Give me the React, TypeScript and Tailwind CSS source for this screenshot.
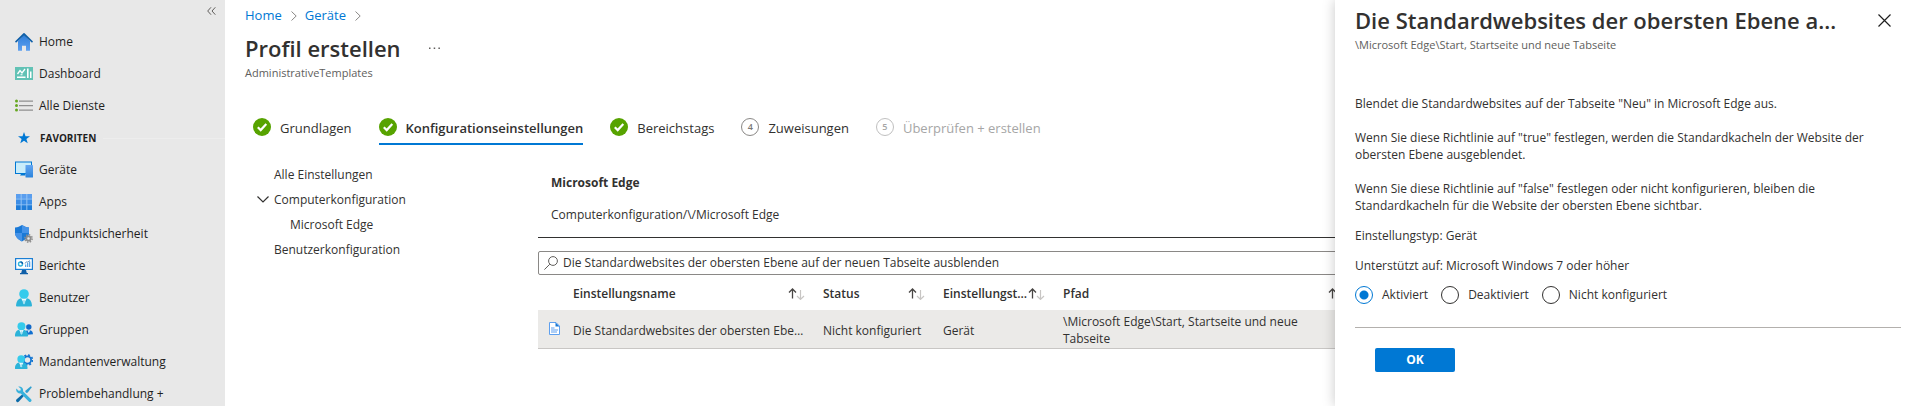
import React, { useState } from 'react';

const HomeIcon = () => (
  <svg viewBox="0 0 18 18" className="h-[18px] w-[18px] shrink-0">
    <defs>
      <linearGradient id="home" x1="0" y1="0" x2="0" y2="1">
        <stop offset="0" stopColor="#2f7fdb" />
        <stop offset="1" stopColor="#5ea0ef" />
      </linearGradient>
    </defs>
    <path d="M3 8l6-6 6 6v9.2a.5.5 0 0 1-.5.5H11v-5H7v5H3.500a.5.5 0 0 1-.5-.5z" fill="url(#home)" />
    <path d="M8.400.3a.9.9 0 0 1 1.200 0L18 8.500l-1 1.300L9 2.400 1 9.800 0 8.500z" fill="#0f5fa8" />
  </svg>
);

const DashboardIcon = () => (
  <svg viewBox="0 0 18 18" className="h-[18px] w-[18px] shrink-0">
    <rect y="2" width="18" height="13" fill="#62c2b5" />
    <path d="M2.500 9l2.500-3.500L7 8l3-4" fill="none" stroke="#fff" strokeWidth="1.300" />
    <path d="M2 11.500h8.500v1.400H2zM5.500 9.300h2v1h-2zM12 3.500h1.600V13H12zM15 6.500h1.500V13H15z" fill="#fff" />
  </svg>
);

const ListIcon = () => (
  <svg viewBox="0 0 18 18" className="h-[18px] w-[18px] shrink-0">
    <g fill="#66a721">
      <circle cx="1.500" cy="4" r="1.500" />
      <circle cx="1.500" cy="8.500" r="1.500" />
      <circle cx="1.500" cy="13" r="1.500" />
    </g>
    <path d="M4 3.500h14v1.200H4zM4 8h14v1.200H4zM4 12.500h14v1.200H4z" fill="#8f8f8f" />
  </svg>
);

const StarIcon = () => (
  <svg viewBox="0 0 18 18" className="h-[18px] w-[18px] shrink-0">
    <path d="M9 3l1.500 4.200 4.500.1-3.600 2.700 1.300 4.300L9 11.800l-3.700 2.500L6.600 10 3 7.300l4.500-.1z" fill="#0078d4" />
  </svg>
);

const DevicesIcon = () => (
  <svg viewBox="0 0 18 18" className="h-[18px] w-[18px] shrink-0">
    <defs>
      <linearGradient id="phone" x1="0" y1="0" x2="0" y2="1">
        <stop offset="0" stopColor="#64a5f1" />
        <stop offset="1" stopColor="#2a84dc" />
      </linearGradient>
    </defs>
    <rect x=".5" y="1" width="16" height="11.500" fill="#c9ecfa" stroke="#0078d4" />
    <path d="M6 13l-1 1.500h5.500V13z" fill="#0078d4" />
    <rect x="10.500" y="4" width="7.500" height="12.500" rx=".5" fill="url(#phone)" />
  </svg>
);

const AppsIcon = () => (
  <svg viewBox="0 0 18 18" className="h-[18px] w-[18px] shrink-0">
    <rect x="1" y="1" width="16" height="16" fill="#9cc8f5" />
    <path d="M1 1h4.700v4.700H1zM6.600 1h4.800v4.700H6.600zM12.300 1H17v4.700h-4.700z" fill="#5a9eee" />
    <path d="M1 6.600h4.700v4.800H1zM6.600 6.600h4.800v4.800H6.600zM12.300 6.600H17v4.800h-4.700z" fill="#3d8ee6" />
    <path d="M1 12.300h4.700V17H1zM6.600 12.300h4.800V17H6.600zM12.300 12.300H17V17h-4.700z" fill="#1f7cd8" />
  </svg>
);

const ShieldIcon = () => (
  <svg viewBox="0 0 18 18" className="h-[18px] w-[18px] shrink-0">
    <path d="M0 2.500C3.500 2.400 4 1.500 7 0c3 1.500 3.500 2.400 7 2.500V8c0 4-4 7-7 8.500C4 15 0 12 0 8z" fill="#1a79d6" />
    <path d="M7 0c3 1.500 3.500 2.400 7 2.500V8H7zM7 8v8.500C4 15 0 12 0 8z" fill="#4593e8" />
    <circle cx="13.500" cy="13.500" r="2.200" fill="#e8e8e8" stroke="#8c8c8c" strokeWidth="1.800" />
    <circle cx="13.500" cy="13.500" r="3.700" fill="none" stroke="#8c8c8c" strokeWidth="1.400" strokeDasharray="1.450 1.450" />
  </svg>
);

const ReportsIcon = () => (
  <svg viewBox="0 0 18 18" className="h-[18px] w-[18px] shrink-0">
    <rect x=".6" y="1.600" width="16.800" height="10.800" fill="#fff" stroke="#1b7fd4" strokeWidth="1.200" />
    <path d="M7 13h4l.8 3H13v1.200H5V16h1.200z" fill="#0f5fa8" />
    <circle cx="5.500" cy="7" r="2" fill="none" stroke="#32b4dc" strokeWidth="1.400" />
    <path d="M5.500 5a2 2 0 0 1 2 2" fill="none" stroke="#0f5fa8" strokeWidth="1.400" />
    <path d="M10 7.500h1.300V10H10zM12 6h1.300v4H12zM14 4.500h1.300V10H14z" fill="#5aa5e6" />
    <path d="M9.800 6.400l2-1.600 1 .4 2-1.600" fill="none" stroke="#0f5fa8" strokeWidth=".7" />
  </svg>
);

const UserShape = () => (
  <>
    <path d="M1 16.500C1.300 12.500 3 9.800 6 9.300h6c3 .5 4.700 3.200 5 7.200a1 1 0 0 1-1 1H2a1 1 0 0 1-1-1z" fill="#2cb3d9" />
    <path d="M6.200 9.300h5.600L9 15z" fill="#f2fbfe" />
    <path d="M8.300 11h1.400l.5 3L9 15.500 7.800 14z" fill="#a5e2f3" />
    <circle cx="9" cy="5" r="4.800" fill="#35cbec" />
  </>
);

const UserIcon = () => (
  <svg viewBox="0 0 18 18" className="h-[18px] w-[18px] shrink-0">
    <UserShape />
  </svg>
);

const GroupIcon = () => (
  <svg viewBox="0 0 18 18" className="h-[18px] w-[18px] shrink-0">
    <path d="M9 14c.2-3 1.500-4.500 3.500-4.800h2.600c1.800.3 2.800 1.900 2.900 4z" fill="#0f6fd0" />
    <path d="M12.300 9.200h3L13.800 12z" fill="#d5ebfc" />
    <circle cx="13.800" cy="6" r="2.700" fill="#1069c9" />
    <g transform="translate(-1 1) scale(.83)">
      <UserShape />
    </g>
  </svg>
);

const TenantIcon = () => (
  <svg viewBox="0 0 18 18" className="h-[18px] w-[18px] shrink-0">
    <circle cx="12.500" cy="7" r="3.600" fill="none" stroke="#1375d2" strokeWidth="1.800" />
    <circle cx="12.500" cy="7" r="5" fill="none" stroke="#1375d2" strokeWidth="1.600" strokeDasharray="1.960 1.960" />
    <g transform="translate(-1 2) scale(.8)">
      <UserShape />
    </g>
  </svg>
);

const ToolsIcon = () => (
  <svg viewBox="0 0 18 18" className="h-[18px] w-[18px] shrink-0">
    <path d="M15.800 1.200l1 1-4 5.300-1.300.5-1.300-1.300.5-1.300z" fill="#2d9fd0" />
    <path d="M8.500 8.200L10 9.700l-6.300 7a1.600 1.600 0 0 1-2.300-2.200z" fill="#0a6aa8" />
    <path d="M3.200 1.500A4 4 0 0 1 8 6.300l8 8a1.500 1.500 0 0 1-2.200 2.200l-8-8A4 4 0 0 1 1.300 3.600l2.400 2.200 1.800-.4.300-1.700z" fill="#38b1dc" />
  </svg>
);

const CheckBadge = () => (
  <svg viewBox="0 0 18 18" className="h-[18px] w-[18px] shrink-0">
    <circle cx="9" cy="9" r="9" fill="#57a300" />
    <path d="M4.800 9.300l2.900 2.800 5.600-6" fill="none" stroke="#fff" strokeWidth="2.200" />
  </svg>
);

const SortIcon = () => (
  <svg viewBox="0 0 17 12" className="h-3 w-[17px] shrink-0" fill="none">
    <path d="M4.500 10.500V1M1 4.500L4.500 1 8 4.500" stroke="#484644" strokeWidth="1.300" />
    <path d="M12.500 2v9.300M9 8l3.500 3.400L16 8" stroke="#c8c6c4" strokeWidth="1.200" />
  </svg>
);

const Crumb = ({ label }: { label: string }) => (
  <>
    <a href="#" className="text-[#0078d4]">{label}</a>
    <svg viewBox="0 0 6 10" className="mr-2 ml-[9px] h-[10px] w-[6px]" fill="none" stroke="#8a8886">
      <path d="M.5.500L5.200 5 .5 9.500" />
    </svg>
  </>
);

const menuTop = [
  { icon: HomeIcon, label: 'Home' },
  { icon: DashboardIcon, label: 'Dashboard' },
  { icon: ListIcon, label: 'Alle Dienste' },
];

const favorites = [
  { icon: DevicesIcon, label: 'Geräte' },
  { icon: AppsIcon, label: 'Apps' },
  { icon: ShieldIcon, label: 'Endpunktsicherheit' },
  { icon: ReportsIcon, label: 'Berichte' },
  { icon: UserIcon, label: 'Benutzer' },
  { icon: GroupIcon, label: 'Gruppen' },
  { icon: TenantIcon, label: 'Mandantenverwaltung' },
  { icon: ToolsIcon, label: 'Problembehandlung +' },
];

const steps = [
  { label: 'Grundlagen', state: 'done' },
  { label: 'Konfigurationseinstellungen', state: 'active' },
  { label: 'Bereichstags', state: 'done' },
  { label: 'Zuweisungen', state: 'open' },
  { label: 'Überprüfen + erstellen', state: 'disabled' },
];

const columns = [
  { label: 'Einstellungsname', width: 'w-[250px]' },
  { label: 'Status', width: 'w-[120px]' },
  { label: 'Einstellungstyp', width: 'w-[120px]' },
  { label: 'Pfad', width: 'w-[300px]' },
];

const options = ['Aktiviert', 'Deaktiviert', 'Nicht konfiguriert'];

const MenuItem = ({ icon: Icon, label }: { icon: React.FC; label: string }) => (
  <a href="#" className="flex h-8 items-center gap-[6px] px-[15px] whitespace-nowrap">
    <Icon />
    <span>{label}</span>
  </a>
);

const Sidebar = () => (
  <nav className="w-[225px] shrink-0 bg-[#e8e8e8] text-[12px] text-[#1f1f1f]">
    <div className="flex h-[26px] justify-end pt-[7px] pr-[9px]">
      <button type="button" aria-label="Menü einklappen" className="h-2">
        <svg viewBox="0 0 9 8" className="h-2 w-[9px]" fill="none" stroke="#605e5c">
          <path d="M4 .3L.7 4 4 7.700M8.300.3L5 4l3.300 3.700" />
        </svg>
      </button>
    </div>
    {menuTop.map((item) => (
      <MenuItem key={item.label} {...item} />
    ))}
    <div className="flex h-8 items-center gap-[7px] pl-[15px]">
      <StarIcon />
      <span className="text-[10px] font-bold">FAVORITEN</span>
      <span className="h-px flex-1 bg-[#ededed]" />
    </div>
    {favorites.map((item) => (
      <MenuItem key={item.label} {...item} />
    ))}
  </nav>
);

const Steps = () => (
  <div className="mt-8 flex gap-[27px] pl-2 text-[13px] whitespace-nowrap">
    {steps.map((step, i) => (
      <button
        key={step.label}
        type="button"
        disabled={step.state === 'disabled'}
        className={`flex h-[34px] items-center gap-[9px] border-b-2 ${
          step.state === 'active' ? 'border-[#0078d4] font-semibold' : 'border-transparent'
        } ${step.state === 'disabled' ? 'text-[#a6a6a6]' : 'text-[#323130]'}`}
      >
        {step.state === 'done' || step.state === 'active' ? (
          <CheckBadge />
        ) : (
          <span
            className={`flex h-[18px] w-[18px] items-center justify-center rounded-full border text-[9px] font-semibold ${
              step.state === 'open' ? 'border-[#8a8886] text-[#797775]' : 'border-[#c0c0c0] text-[#a6a6a6]'
            }`}
          >
            {i + 1}
          </span>
        )}
        <span className="pt-[3px]">{step.label}</span>
      </button>
    ))}
  </div>
);

const SettingsTree = () => (
  <ul className="w-[293px] shrink-0 pt-[17px] pl-3 leading-[25px]">
    <li className="pl-[17px]">Alle Einstellungen</li>
    <li>
      <button type="button" className="flex items-center gap-[5px]">
        <svg viewBox="0 0 12 7" className="h-[7px] w-3" fill="none" stroke="#323130" strokeWidth="1.200">
          <path d="M.5.500L6 6 11.500.5" />
        </svg>
        Computerkonfiguration
      </button>
    </li>
    <li className="pl-[33px]">Microsoft Edge</li>
    <li className="pl-[17px]">Benutzerkonfiguration</li>
  </ul>
);

const SettingsTable = () => (
  <table className="w-[815px] table-fixed text-left leading-[17px]">
    <thead>
      <tr className="h-[35px]">
        <th className="w-[25px]" />
        {columns.map((col) => (
          <th key={col.label} className={`${col.width} pt-[2px] pr-2 pl-[10px] font-semibold`}>
            <span className="flex items-center justify-between">
              <span className="truncate">{col.label}</span>
              <SortIcon />
            </span>
          </th>
        ))}
      </tr>
    </thead>
    <tbody>
      <tr className="h-[38px] border-b border-[#c8c6c4] bg-[#ebeae8]">
        <td className="pl-[11px]">
          <svg viewBox="0 0 11 13" className="h-[13px] w-[11px]">
            <path d="M.5.500H7L10.500 4v8.500H.5z" fill="#fff" stroke="#5ea0ef" />
            <path d="M6.500.500V4.500h4z" fill="#1a79d6" />
            <path d="M2 5.500h3.500v1H2zM2 7.500h7v1H2zM2 9.500h6v1H2z" fill="#5ea0ef" />
          </svg>
        </td>
        <td className="truncate pt-[3px] pr-1 pl-[10px]">
          Die Standardwebsites der obersten Ebene auf der neuen Tabseite ausblenden
        </td>
        <td className="pt-[3px] pl-[10px] whitespace-nowrap">Nicht konfiguriert</td>
        <td className="pt-[3px] pl-[10px]">Gerät</td>
        <td className="pt-[3px] pr-8 pl-[10px]">\Microsoft Edge\Start, Startseite und neue Tabseite</td>
      </tr>
    </tbody>
  </table>
);

const DetailPanel = () => {
  const [selected, setSelected] = useState(options[0]);

  return (
    <aside className="absolute inset-y-0 right-0 w-[585px] bg-white pr-[19px] pl-5 shadow-[0_0_12px_rgba(0,0,0,0.22)]">
      <div className="flex h-10 items-center">
        <h2 className="w-[494px] truncate text-[22px] font-semibold">
          Die Standardwebsites der obersten Ebene auf der neuen Tabseite ausblenden
        </h2>
        <button type="button" aria-label="Schließen" className="ml-auto pr-[10px]">
          <svg viewBox="0 0 13 13" className="h-[13px] w-[13px]" stroke="#1f1f1f" strokeWidth="1.200">
            <path d="M.5.500l12 12M12.500.5l-12 12" />
          </svg>
        </button>
      </div>
      <p className="text-[11px] leading-[10px] text-[#605e5c]">\Microsoft Edge\Start, Startseite und neue Tabseite</p>
      <div className="mt-[45px] w-[535px] leading-[17px]">
        <p>Blendet die Standardwebsites auf der Tabseite "Neu" in Microsoft Edge aus.</p>
        <p className="mt-[17px]">
          Wenn Sie diese Richtlinie auf "true" festlegen, werden die Standardkacheln der Website der obersten Ebene
          ausgeblendet.
        </p>
        <p className="mt-[17px]">
          Wenn Sie diese Richtlinie auf "false" festlegen oder nicht konfigurieren, bleiben die Standardkacheln für die
          Website der obersten Ebene sichtbar.
        </p>
        <p className="mt-[13px]">Einstellungstyp: Gerät</p>
        <p className="mt-[13px]">Unterstützt auf: Microsoft Windows 7 oder höher</p>
      </div>
      <div className="mt-3 flex gap-[13px]">
        {options.map((option) => (
          <label key={option} className="flex items-center gap-[9px]">
            <input
              type="radio"
              name="state"
              checked={selected === option}
              onChange={() => setSelected(option)}
              className="h-[18px] w-[18px] appearance-none rounded-full border border-[#323130] bg-white checked:border-[#0078d4] checked:bg-[radial-gradient(circle,#0078d4_4px,white_5px)]"
            />
            {option}
          </label>
        ))}
      </div>
      <hr className="mt-[23px] border-[#b3b0ad]" />
      <button
        type="button"
        className="mt-5 ml-5 h-6 w-20 rounded-[2px] bg-[#0078d4] text-[12px] font-bold text-white"
      >
        OK
      </button>
    </aside>
  );
};

export default function App() {
  const [search, setSearch] = useState('Die Standardwebsites der obersten Ebene auf der neuen Tabseite ausblenden');

  return (
    <div className="relative flex h-screen overflow-hidden bg-white font-['Open_Sans','Noto_Sans',sans-serif] text-[12px] text-[#323130]">
      <Sidebar />
      <main className="min-w-0 flex-1 overflow-hidden pl-5">
        <div className="flex h-8 items-center text-[13px]">
          <Crumb label="Home" />
          <Crumb label="Geräte" />
        </div>
        <div className="flex h-8 items-center">
          <h1 className="text-[22px] font-semibold">Profil erstellen</h1>
          <button type="button" aria-label="Weitere Aktionen" className="ml-7">
            <svg viewBox="0 0 11 2" className="h-[2px] w-[11px]" fill="#605e5c">
              <path d="M0 .5h1.500V2H0zM4.700.5h1.500V2H4.700zM9.400.5h1.500V2H9.400z" />
            </svg>
          </button>
        </div>
        <p className="pt-[2px] text-[11px] leading-[13px] text-[#605e5c]">AdministrativeTemplates</p>
        <Steps />
        <div className="flex">
          <SettingsTree />
          <div className="min-w-0 flex-1 pt-[30px]">
            <h3 className="pl-[13px] leading-4 font-bold">Microsoft Edge</h3>
            <p className="mt-4 pl-[13px] leading-4">Computerkonfiguration/\/Microsoft Edge</p>
            <hr className="mt-[14px] border-[#323130]" />
            <label className="mt-[13px] flex h-6 items-center gap-[5px] rounded-[2px] border border-[#8a8886] pl-[5px]">
              <svg viewBox="0 0 14 14" className="h-[14px] w-[14px] shrink-0" fill="none" stroke="#605e5c">
                <circle cx="9" cy="5" r="4.400" />
                <path d="M5.800 8.200L.4 13.600" />
              </svg>
              <input
                type="text"
                aria-label="Einstellungen suchen"
                value={search}
                onChange={(e) => setSearch(e.target.value)}
                className="flex-1 bg-transparent outline-none"
              />
            </label>
            <SettingsTable />
          </div>
        </div>
      </main>
      <DetailPanel />
    </div>
  );
}
